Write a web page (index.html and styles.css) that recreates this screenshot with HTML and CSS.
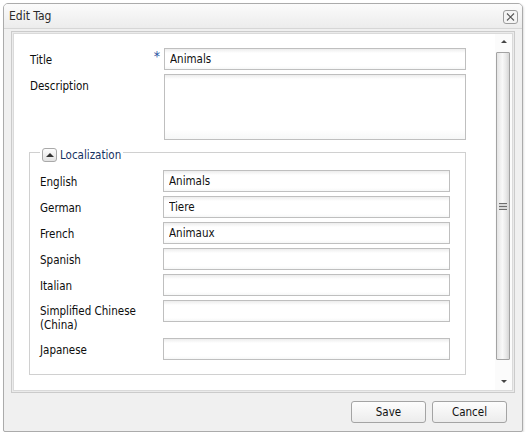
FILE: index.html
```html
<!DOCTYPE html>
<html>
<head>
<meta charset="utf-8">
<title>Edit Tag</title>
<link rel="stylesheet" href="styles.css">
</head>
<body>
<div class="window">
  <div class="header">
    <span class="title">Edit Tag</span>
    <button class="close" aria-label="Close">
      <svg width="15" height="14" viewBox="0 0 15 14">
        <rect x="0.5" y="0.5" width="14" height="13" rx="2.5" ry="2.5" fill="#f4f4f4" stroke="#9c9c9c"/>
        <path d="M4 3.5 L11 10.5 M11 3.5 L4 10.5" stroke="#555" stroke-width="1.1" fill="none"/>
      </svg>
    </button>
  </div>
  <div class="body">
    <div class="panel">
      <div class="scroller">
        <div class="content">
          <div class="row">
            <label class="label">Title<span class="req">*</span></label>
            <input class="field" type="text" value="Animals">
          </div>
          <div class="row row-desc">
            <label class="label">Description</label>
            <textarea class="field area"></textarea>
          </div>
          <fieldset class="group">
            <legend class="legend"><span class="toggle"><span class="tri-up"></span></span><span class="legend-text">Localization</span></legend>
            <div class="frow"><label class="flabel">English</label><input class="field" type="text" value="Animals"></div>
            <div class="frow"><label class="flabel">German</label><input class="field" type="text" value="Tiere"></div>
            <div class="frow"><label class="flabel">French</label><input class="field" type="text" value="Animaux"></div>
            <div class="frow"><label class="flabel">Spanish</label><input class="field" type="text" value=""></div>
            <div class="frow"><label class="flabel">Italian</label><input class="field" type="text" value=""></div>
            <div class="frow"><label class="flabel two">Simplified Chinese (China)</label><input class="field" type="text" value=""></div>
            <div class="frow"><label class="flabel">Japanese</label><input class="field" type="text" value=""></div>
          </fieldset>
        </div>
        <div class="scrollbar">
          <div class="sb-up"><span class="arrow-up"></span></div>
          <div class="sb-track">
            <div class="thumb"><span class="grip"></span></div>
          </div>
          <div class="sb-down"><span class="arrow-down"></span></div>
        </div>
      </div>
    </div>
  </div>
  <div class="footer">
    <button class="btn">Save</button>
    <button class="btn">Cancel</button>
  </div>
</div>
</body>
</html>
```
FILE: styles.css
```css
* { box-sizing: border-box; }

html, body {
  margin: 0;
  padding: 0;
  background: #ffffff;
}

body {
  font-family: "DejaVu Sans Condensed", "DejaVu Sans", "Liberation Sans", sans-serif;
  font-size: 11.5px;
  color: #0d0d0d;
}

.window {
  margin: 3px 7px 0 3px;
  height: 429px;
  border: 1px solid #ababab;
  border-radius: 5px 5px 2px 2px;
  background: #f0f0f0;
  box-shadow: 1px 1px 2px rgba(0, 0, 0, 0.12);
  display: flex;
  flex-direction: column;
}

.header {
  height: 25px;
  border-bottom: 1px solid #d6d6d6;
  border-radius: 4px 4px 0 0;
  background: linear-gradient(#fbfbfb, #ececec);
  display: flex;
  align-items: center;
  justify-content: space-between;
  padding: 0 4px 0 5px;
}

.title {
  font-size: 12px;
  color: #2a2a2a;
}

.close {
  border: 0;
  padding: 0;
  margin: 1px 0 0 0;
  background: none;
  width: 15px;
  height: 14px;
  display: block;
}
.close svg { display: block; }

.body {
  padding: 2px 7px 0 7px;
}

.panel {
  height: 362px;
  border: 1px solid #cbcbcb;
  padding: 1px;
  background: #ebebeb;
}

.scroller {
  height: 100%;
  border: 1px solid #dadada;
  background: #fff;
  display: flex;
  overflow: hidden;
}

.content {
  flex: 1;
  padding: 14px 29px 0 15px;
  overflow: hidden;
}

.row {
  display: flex;
  margin-bottom: 4px;
}
.row-desc { margin-bottom: 0; }

.label {
  width: 135px;
  flex: none;
  padding: 5px 4px 0 1px;
  line-height: 14px;
  display: flex;
  justify-content: space-between;
  align-items: flex-start;
}

.req {
  color: #1d4f9e;
  font-size: 14px;
  line-height: 12px;
  margin-top: -3px;
}

.field {
  flex: 1;
  min-width: 0;
  height: 22px;
  margin: 0;
  border: 1px solid #bfbfbf;
  background: linear-gradient(#ededed, #ffffff 4px, #ffffff 85%, #f6f7f7);
  padding: 0 5px;
  font-family: inherit;
  font-size: 11.5px;
  color: #111;
  outline: none;
}

.area {
  height: 66px;
  resize: none;
  padding: 3px 5px;
}

.group {
  margin: 2px 0 0 0;
  border: 1px solid #d0d0d0;
  padding: 8px 15px 14px 10px;
  min-width: 0;
}

.legend {
  padding: 6px 2px 0 2px;
  display: flex;
  align-items: center;
  height: 20px;
  line-height: 14px;
}

.toggle {
  width: 15px;
  height: 14px;
  border: 1px solid #a9a9a9;
  border-radius: 3px;
  background: linear-gradient(#fdfdfd, #e2e2e2);
  display: flex;
  align-items: center;
  justify-content: center;
  margin-right: 3px;
}

.tri-up {
  width: 0;
  height: 0;
  border-left: 4px solid transparent;
  border-right: 4px solid transparent;
  border-bottom: 4px solid #333;
}

.legend-text {
  color: #15315f;
}

.frow {
  display: flex;
  margin-bottom: 4px;
}
.frow:last-child { margin-bottom: 0; }

.flabel {
  width: 123px;
  flex: none;
  padding-top: 5px;
  line-height: 14px;
}
.flabel.two {
  padding: 4px 20px 2px 0;
}

.scrollbar {
  width: 17px;
  flex: none;
  display: flex;
  flex-direction: column;
  background: #fbfbfb;
}

.sb-up {
  height: 18px;
  display: flex;
  justify-content: center;
  padding-top: 6px;
}

.arrow-up {
  width: 0;
  height: 0;
  border-left: 3px solid transparent;
  border-right: 3px solid transparent;
  border-bottom: 3px solid #444;
}

.sb-track {
  flex: 1;
  padding: 0 2px 12px 1px;
  display: flex;
}

.thumb {
  flex: 1;
  border: 1px solid #a3a3a3;
  border-radius: 1px;
  background: linear-gradient(to right, #e4e4e4, #f9f9f9 45%, #e9e9e9 75%, #d6d6d6);
  display: flex;
  align-items: center;
  justify-content: center;
}

.grip {
  width: 8px;
  height: 7px;
  background: repeating-linear-gradient(#6e6e6e 0 1px, #d8d8d8 1px 3px);
}

.sb-down {
  height: 18px;
  display: flex;
  justify-content: center;
  padding-top: 8px;
}

.arrow-down {
  width: 0;
  height: 0;
  border-left: 3px solid transparent;
  border-right: 3px solid transparent;
  border-top: 3px solid #444;
}

.footer {
  flex: 1;
  display: flex;
  justify-content: flex-end;
  align-items: flex-start;
  gap: 6px;
  padding: 8px 15px 0 0;
}

.btn {
  width: 75px;
  height: 22px;
  border: 1px solid #a4a4a4;
  border-radius: 3px;
  background: linear-gradient(#fdfdfd, #ececec);
  font-family: inherit;
  font-size: 11.5px;
  color: #111;
  padding: 0;
}
```
